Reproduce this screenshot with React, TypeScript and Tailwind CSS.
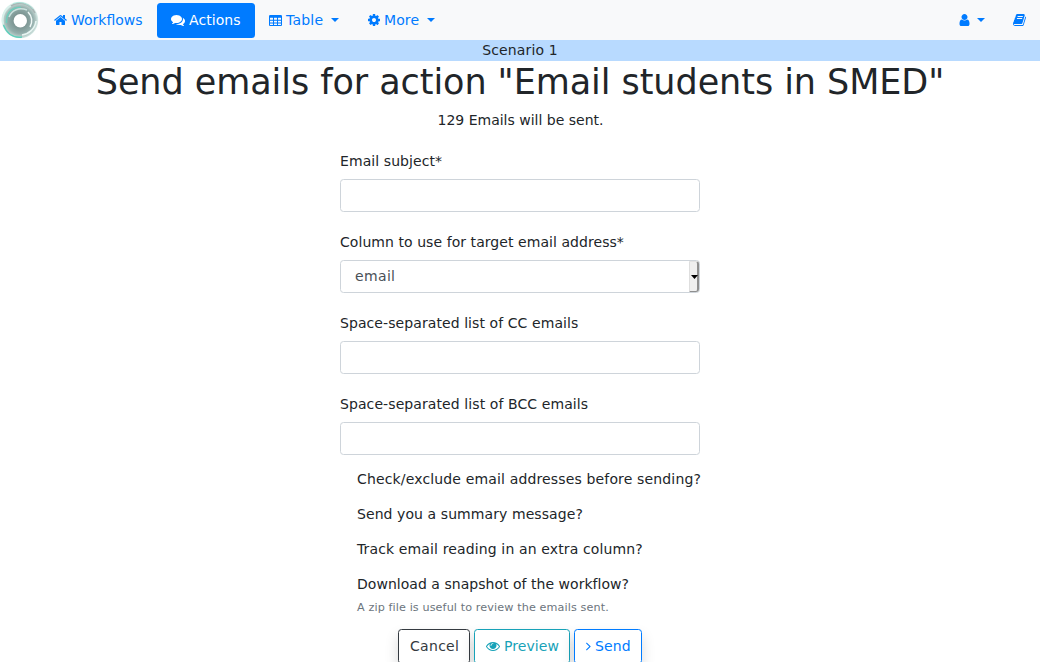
import React from "react";

const paths = {
  home: "M1472 992v480q0 26-19 45t-45 19h-384v-384h-256v384h-384q-26 0-45-19t-19-45v-480q0-1 .5-3t.5-3l575-474 575 474q1 2 1 6zm223-69l-62 74q-8 9-21 11h-3q-13 0-21-7l-692-577-692 577q-12 8-24 7-13-2-21-11l-62-74q-8-10-7-23.5t11-21.5l719-599q32-26 76-26t76 26l244 204v-195q0-14 9-23t23-9h192q14 0 23 9t9 23v408l219 182q10 8 11 21.5t-7 23.5z",
  comments:
    "M1408 768q0 139-94 257t-256.5 186.5-353.5 68.5q-86 0-176-16-124 88-278 128-36 9-86 16h-3q-11 0-20.5-8t-11.5-21q-1-3-1-6.5t.5-6.5 2-6l2.5-5 3.5-5.5 4-5 4.5-5 4-4.5q5-6 23-25t26-29.5 22.5-29 25-38.5 20.5-44q-124-72-195-177t-71-224q0-139 94-257t256.5-186.5 353.5-68.5 353.5 68.5 256.5 186.5 94 257zm384 256q0 120-71 224.5t-195 176.5q10 24 20.5 44t25 38.5 22.5 29 26 29.5 23 25q1 1 4 4.5t4.5 5 4 5 3.5 5.5l2.5 5 2 6 .5 6.5-1 6.5q-3 14-13 22t-22 7q-50-7-86-16-154-40-278-128-90 16-176 16-271 0-472-132 58 4 88 4 161 0 309-45t264-129q125-92 192-212t67-254q0-77-23-152 129 71 204 178t75 230z",
  table:
    "M224 256h1344q66 0 113 47t47 113v1088q0 66-47 113t-113 47h-1344q-66 0-113-47t-47-113v-1088q0-66 47-113t113-47zM192 640v192q0 32 32 32h320q32 0 32-32v-192q0-32-32-32h-320q-32 0-32 32zM704 640v192q0 32 32 32h320q32 0 32-32v-192q0-32-32-32h-320q-32 0-32 32zM1216 640v192q0 32 32 32h320q32 0 32-32v-192q0-32-32-32h-320q-32 0-32 32zM192 1024v160q0 32 32 32h320q32 0 32-32v-160q0-32-32-32h-320q-32 0-32 32zM704 1024v160q0 32 32 32h320q32 0 32-32v-160q0-32-32-32h-320q-32 0-32 32zM1216 1024v160q0 32 32 32h320q32 0 32-32v-160q0-32-32-32h-320q-32 0-32 32zM192 1376v128q0 32 32 32h320q32 0 32-32v-128q0-32-32-32h-320q-32 0-32 32zM704 1376v128q0 32 32 32h320q32 0 32-32v-128q0-32-32-32h-320q-32 0-32 32zM1216 1376v128q0 32 32 32h320q32 0 32-32v-128q0-32-32-32h-320q-32 0-32 32z",
  cog: "M1152 896q0-106-75-181t-181-75-181 75-75 181 75 181 181 75 181-75 75-181zm512-109v222q0 12-8 23t-20 13l-185 28q-19 54-39 91 35 50 107 138 10 12 10 25t-9 23q-27 37-99 108t-94 71q-12 0-26-9l-138-108q-44 23-91 38-16 136-29 186-7 28-36 28h-222q-14 0-24.5-8.5t-11.5-21.5l-28-184q-49-16-90-37l-141 107q-10 9-25 9-14 0-25-11-126-114-165-168-7-10-7-23 0-12 8-23 15-21 51-66.5t54-70.5q-27-50-41-99l-183-27q-13-2-21-12.5t-8-23.5v-222q0-12 8-23t19-13l186-28q14-46 39-92-40-57-107-138-10-12-10-24 0-10 9-23 26-36 98.5-107.5t94.5-71.5q13 0 26 10l138 107q44-23 91-38 16-136 29-186 7-28 36-28h222q14 0 24.5 8.5t11.5 21.5l28 184q49 16 90 37l142-107q9-9 24-9 13 0 25 10 129 119 165 170 7 8 7 22 0 12-8 23-15 21-51 66.5t-54 70.5q26 50 41 98l183 28q13 2 21 12.5t8 23.5z",
  user: "M1536 1399q0 109-62.5 187t-150.5 78h-854q-88 0-150.5-78t-62.5-187q0-85 8.5-160.5t31.5-152 58.5-131 94-89 134.5-34.5q131 128 313 128t313-128q76 0 134.5 34.5t94 89 58.5 131 31.5 152 8.5 160.5zm-256-887q0 159-112.5 271.5t-271.5 112.5-271.5-112.5-112.5-271.5 112.5-271.5 271.5-112.5 271.5 112.5 112.5 271.5z",
  book: "M1703 478q40 57 18 129l-275 906q-19 64-76.5 107.5t-122.5 43.5h-923q-77 0-148.5-53.5t-99.5-131.5q-24-67-2-127 0-4 3-27t4-37q1-8-3-21.5t-3-19.5q2-11 8-21t16.5-23.5 16.5-23.5q23-38 45-91.5t30-91.5q3-10 .5-30t-.5-28q3-11 17-28t17-23q21-36 42-92t25-90q1-9-2.5-32t.5-28q4-13 22-30.5t22-22.5q19-26 42.5-84.5t27.5-96.5q1-8-3-25.5t-2-26.5q2-8 9-18t18-23 17-21q8-12 16.5-30.5t15-35 16-36 19.5-32 26.5-23.5 36-11.5 47.5 5.5l-1 3q38-9 51-9h761q74 0 114 56t18 130l-274 906q-36 119-71.5 153.5t-128.5 34.5h-869q-27 0-38 15-11 16-1 43 24 70 144 70h923q29 0 56-15.5t35-41.5l300-987q7-22 5-57 38 15 59 43zm-1064 2q-4 13 2 22.5t20 9.5h608q13 0 25.5-9.5t16.5-22.5l21-64q4-13-2-22.5t-20-9.5h-608q-13 0-25.5 9.5t-16.5 22.5zm-83 256q-4 13 2 22.5t20 9.5h608q13 0 25.5-9.5t16.5-22.5l21-64q4-13-2-22.5t-20-9.5h-608q-13 0-25.5 9.5t-16.5 22.5z",
  eye: "M1664 960q-152-236-381-353 61 104 61 225 0 185-131.5 316.5t-316.5 131.5-316.5-131.5-131.5-316.5q0-121 61-225-229 117-381 353 133 205 333.5 326.5t434.5 121.5 434.5-121.5 333.5-326.5zm-720-384q0-20-14-34t-34-14q-125 0-214.5 89.5t-89.5 214.5q0 20 14 34t34 14 34-14 14-34q0-86 61-147t147-61q20 0 34-14t14-34zm848 384q0 34-20 69-140 230-376.5 368.5t-499.5 138.5-499.5-139-376.5-368q-20-35-20-69t20-69q140-229 376.5-368t499.5-139 499.5 139 376.5 368q20 35 20 69z",
  angle:
    "M1171 960q0 13-10 23l-466 466q-10 10-23 10t-23-10l-50-50q-10-10-10-23t10-23l393-393-393-393q-10-10-10-23t10-23l50-50q10-10 23-10t23 10l466 466q10 10 10 23z",
};

function Icon({ name, units }: { name: keyof typeof paths; units: number }) {
  return (
    <svg
      className="shrink-0"
      width={(units / 1792) * 14}
      height={14}
      viewBox={`${(1792 - units) / 2} 0 ${units} 1792`}
      fill="currentColor"
      fillRule="evenodd"
    >
      <path d={paths[name]} />
    </svg>
  );
}

function Caret() {
  return (
    <span className="-mt-px ml-1 h-0 w-0 border-x-4 border-t-4 border-x-transparent border-t-current" />
  );
}

function Logo() {
  return (
    <svg width="40" height="40" viewBox="0 0 40 40" fill="none" className="shrink-0">
      <defs>
        <radialGradient id="disc" cx="20" cy="20.5" r="18.5" gradientUnits="userSpaceOnUse">
          <stop offset="0.35" stopColor="#7c9492" />
          <stop offset="0.7" stopColor="#93aeab" />
          <stop offset="0.85" stopColor="#b2c8c4" />
          <stop offset="1" stopColor="#e2f4f0" />
        </radialGradient>
      </defs>
      <rect width="40" height="40" fill="#fff" />
      <circle cx="20" cy="20" r="18.3" fill="url(#disc)" />
      <path d="M3 24A17 17 0 0 1 14 4" stroke="#d9f0eb" strokeWidth="2" />
      <path d="M11 6A16.5 16.5 0 0 1 35 13" stroke="#a9b5b4" strokeWidth="1.6" />
      <path d="M13 3.5A18 18 0 0 1 33 9" stroke="#a4e6d9" strokeWidth="0.8" />
      <path d="M3.5 25C7 34 14 38 22 37" stroke="#5fcfbb" strokeWidth="1.4" />
      <path d="M6.5 23C6 13 12 6.500 21 7.500" stroke="#6fcdbc" strokeWidth="1.5" />
      <path d="M9 17C12 10 19 7 27 10" stroke="#cbe2de" strokeWidth="1.5" />
      <path d="M28 12C32 16 33 22 30 27" stroke="#f0f9f7" strokeWidth="1.5" />
      <path d="M36 21C35 29 29 34 22 35" stroke="#e8f6f3" strokeWidth="1.6" />
      <circle cx="20.3" cy="20.7" r="6.7" fill="#fff" />
    </svg>
  );
}

function Field({ label, tracking, children }: { label: string; tracking: string; children?: React.ReactNode }) {
  return (
    <div className="mt-5">
      <label className={`mb-[7px] block ${tracking}`}>{label}</label>
      <div className="flex h-[33px] items-center justify-between rounded-[3.5px] border border-[#ced4da] bg-white text-[#495057]">
        {children}
      </div>
    </div>
  );
}

const link = "flex h-[35px] items-center rounded-[3.5px] px-3.5";
const button =
  "flex h-[35px] items-center gap-1 rounded-[3.5px] border bg-white shadow-[0_7px_14px_rgba(0,0,0,0.15)]";

export default function App() {
  return (
    <div className="h-[662px] overflow-hidden bg-white font-['DejaVu_Sans',sans-serif] text-[14px] leading-[21px] text-[#212529]">
      <nav className="flex h-10 items-center bg-[#f8f9fa] text-[#007bff]">
        <Logo />
        <a className={`${link} w-[117px] gap-1`}>
          <Icon name="home" units={1664} />
          Workflows
        </a>
        <a className={`${link} w-[98px] gap-1 bg-[#007bff] tracking-[0.08px] text-white`}>
          <Icon name="comments" units={1792} />
          Actions
        </a>
        <a className={`${link} w-[99px] gap-1 tracking-[0.2px]`}>
          <Icon name="table" units={1664} />
          Table
          <Caret />
        </a>
        <a className={`${link} gap-1 tracking-[0.1px]`}>
          <Icon name="cog" units={1536} />
          More
          <Caret />
        </a>
        <div className="ml-auto flex">
          <a className={`${link} gap-[3.5px]`}>
            <Icon name="user" units={1408} />
            <Caret />
          </a>
          <a className={link}>
            <Icon name="book" units={1664} />
          </a>
        </div>
      </nav>
      <div className="bg-[#b8daff] text-center tracking-[0.15px]">Scenario 1</div>
      <h1 className="mb-[7px] text-center text-[35px] leading-[42px] tracking-[-0.06px]">
        Send emails for action "Email students in SMED"
      </h1>
      <p className="pl-px text-center">129 Emails will be sent.</p>
      <form className="mx-auto w-[360px]">
        <Field label="Email subject*" tracking="tracking-[0.08px]" />
        <Field label="Column to use for target email address*" tracking="tracking-[0.06px]">
          <span className="pl-3.5 tracking-[0.35px]">email</span>
          <span className="flex h-full w-[10px] items-center justify-center rounded-r-[3px] border-y border-r-2 border-l border-t-[#e3e3e3] border-r-[#8f8f8f] border-b-[#8f8f8f] border-l-[#dedede] bg-[#efefef]">
            <svg width="7" height="4" viewBox="0 0 7 4" className="ml-px shrink-0">
              <path d="M0 0h7L3.5 4z" fill="#000" />
            </svg>
          </span>
        </Field>
        <Field label="Space-separated list of CC emails" tracking="tracking-[0.08px]" />
        <Field label="Space-separated list of BCC emails" tracking="tracking-[0.09px]" />
        <div className="mt-3.5 flex flex-col gap-3.5 pl-[17px] whitespace-nowrap">
          <p className="tracking-[0.15px]">Check/exclude email addresses before sending?</p>
          <p className="tracking-[0.08px]">Send you a summary message?</p>
          <p className="tracking-[0.13px]">Track email reading in an extra column?</p>
          <div>
            <p className="tracking-[0.03px]">Download a snapshot of the workflow?</p>
            <small className="mt-[3.5px] block text-[11.2px] leading-[17px] tracking-[0.11px] text-[#6c757d]">
              A zip file is useful to review the emails sent.
            </small>
          </div>
        </div>
      </form>
      <div className="mt-[13px] flex justify-center gap-1">
        <button className={`${button} w-[72px] border-[#343a40] pl-[11px] tracking-[0.3px] text-[#343a40]`}>
          Cancel
        </button>
        <button className={`${button} w-24 border-[#17a2b8] pl-[11px] tracking-[0.08px] text-[#17a2b8]`}>
          <Icon name="eye" units={1792} />
          Preview
        </button>
        <button className={`${button} w-[68px] border-[#007bff] pl-[11px] tracking-[0.15px] text-[#007bff]`}>
          <Icon name="angle" units={640} />
          Send
        </button>
      </div>
    </div>
  );
}
